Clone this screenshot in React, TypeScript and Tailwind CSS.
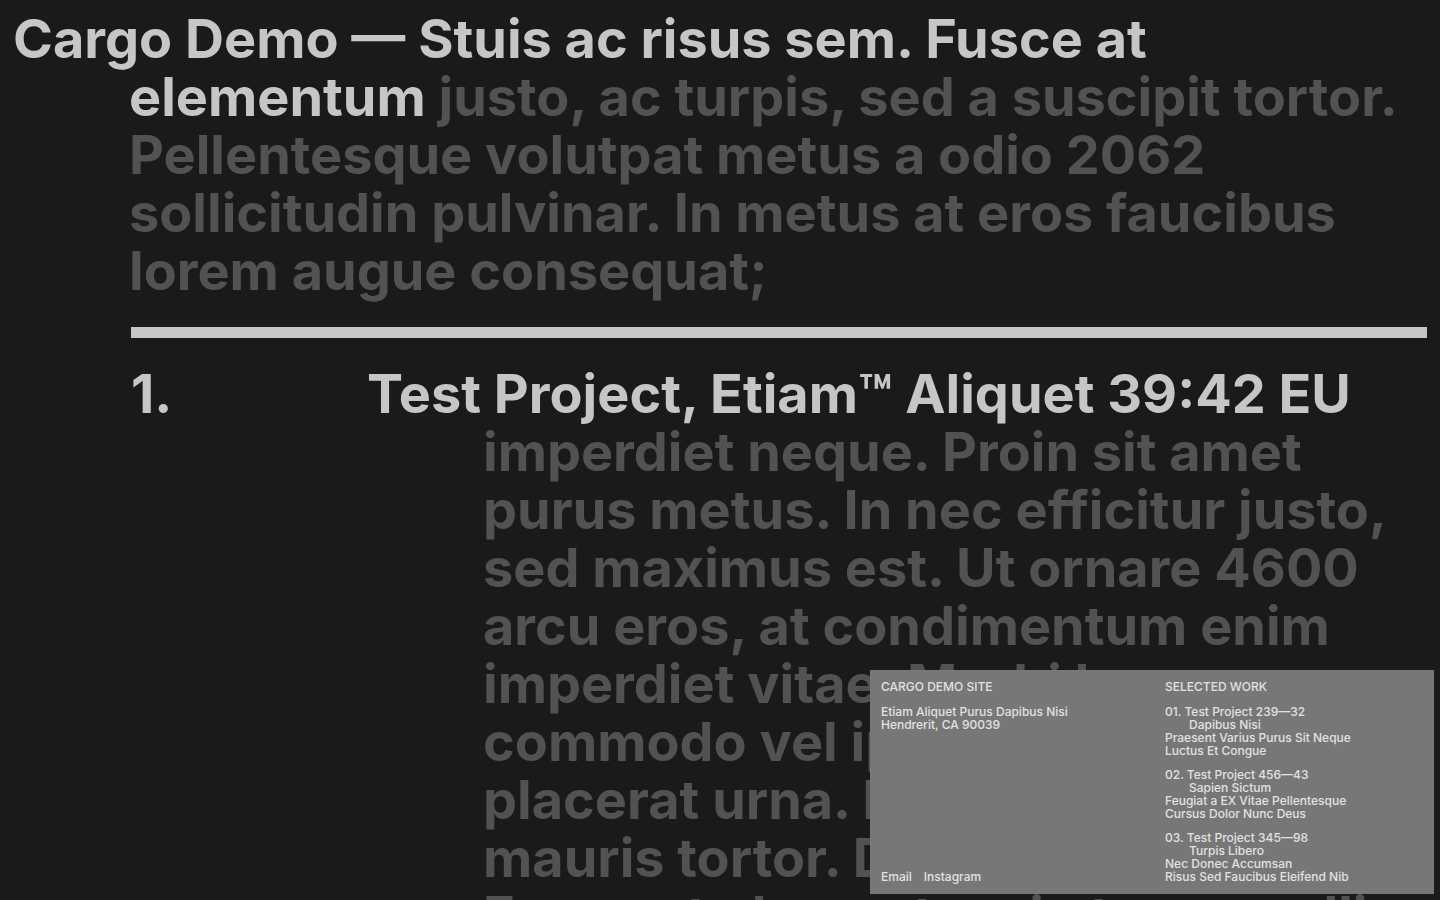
const projects = [
  { no: "01.", name: "Test Project 239—32", sub: "Dapibus Nisi", lines: ["Praesent Varius Purus Sit Neque", "Luctus Et Congue"] },
  { no: "02.", name: "Test Project 456—43", sub: "Sapien Sictum", lines: ["Feugiat a EX Vitae Pellentesque", "Cursus Dolor Nunc Deus"] },
  { no: "03.", name: "Test Project 345—98", sub: "Turpis Libero", lines: ["Nec Donec Accumsan", "Risus Sed Faucibus Eleifend Nib"] },
];

export default function App() {
  return (
    <div className="h-screen overflow-hidden bg-[#1a1a1a] font-['Inter',sans-serif] text-[#c6c6c6]">
      <main className="px-[13px] pt-[10px] text-[54px] font-bold leading-[58px]">
        <h1 className="whitespace-nowrap pl-[116px] -indent-[116px] text-[#525252]">
          <a href="#home" className="text-[#c6c6c6]">
            Cargo Demo — Stuis ac risus sem. Fusce at
            <br />
            elementum
          </a>{" "}
          justo, ac turpis, sed a suscipit tortor.
          <br />
          Pellentesque volutpat metus a odio 2062
          <br />
          sollicitudin pulvinar. In metus at eros faucibus
          <br />
          lorem augue consequat;
        </h1>
        <hr className="ml-[118px] mt-[27px] h-[11px] border-0 bg-[#c6c6c6]" />
        <section className="mt-[27px] flex pl-[118px]">
          <span className="w-[236px] shrink-0">1.</span>
          <p className="whitespace-nowrap pl-[116px] -indent-[116px] text-[#525252]">
            <a href="#project-1" className="text-[#c6c6c6]">Test Project, Etiam™ Aliquet 39:42 EU</a>
            <br />
            imperdiet neque. Proin sit amet
            <br />
            purus metus. In nec efficitur justo,
            <br />
            sed maximus est. Ut ornare 4600
            <br />
            arcu eros, at condimentum enim
            <br />
            imperdiet vitae. Morbi lacus
            <br />
            commodo vel ipsum
            <br />
            placerat urna. In
            <br />
            mauris tortor. Donec
            <br />
            Fusce ut elementum in torus mollis
          </p>
        </section>
      </main>
      <aside className="fixed bottom-[6px] right-[6px] grid w-[564px] grid-cols-2 bg-[#777777] px-[11px] pb-[11px] pt-[10px] text-[12px] font-medium leading-[13px] text-[#e2e2e2]">
        <div className="flex flex-col justify-between">
          <div>
            <h2>CARGO DEMO SITE</h2>
            <p className="mt-3">
              Etiam Aliquet Purus Dapibus Nisi
              <br />
              Hendrerit, CA 90039
            </p>
          </div>
          <nav className="flex gap-3">
            <a href="#email">Email</a>
            <a href="#instagram">Instagram</a>
          </nav>
        </div>
        <div className="pl-[13px]">
          <h2>SELECTED WORK</h2>
          <div className="mt-3 flex flex-col gap-[11px]">
            {projects.map((p) => (
              <a key={p.no} href="#work">
                {p.no} {p.name}
                <span className="block pl-6">{p.sub}</span>
                {p.lines.map((l) => (
                  <span key={l} className="block">{l}</span>
                ))}
              </a>
            ))}
          </div>
        </div>
      </aside>
    </div>
  );
}
